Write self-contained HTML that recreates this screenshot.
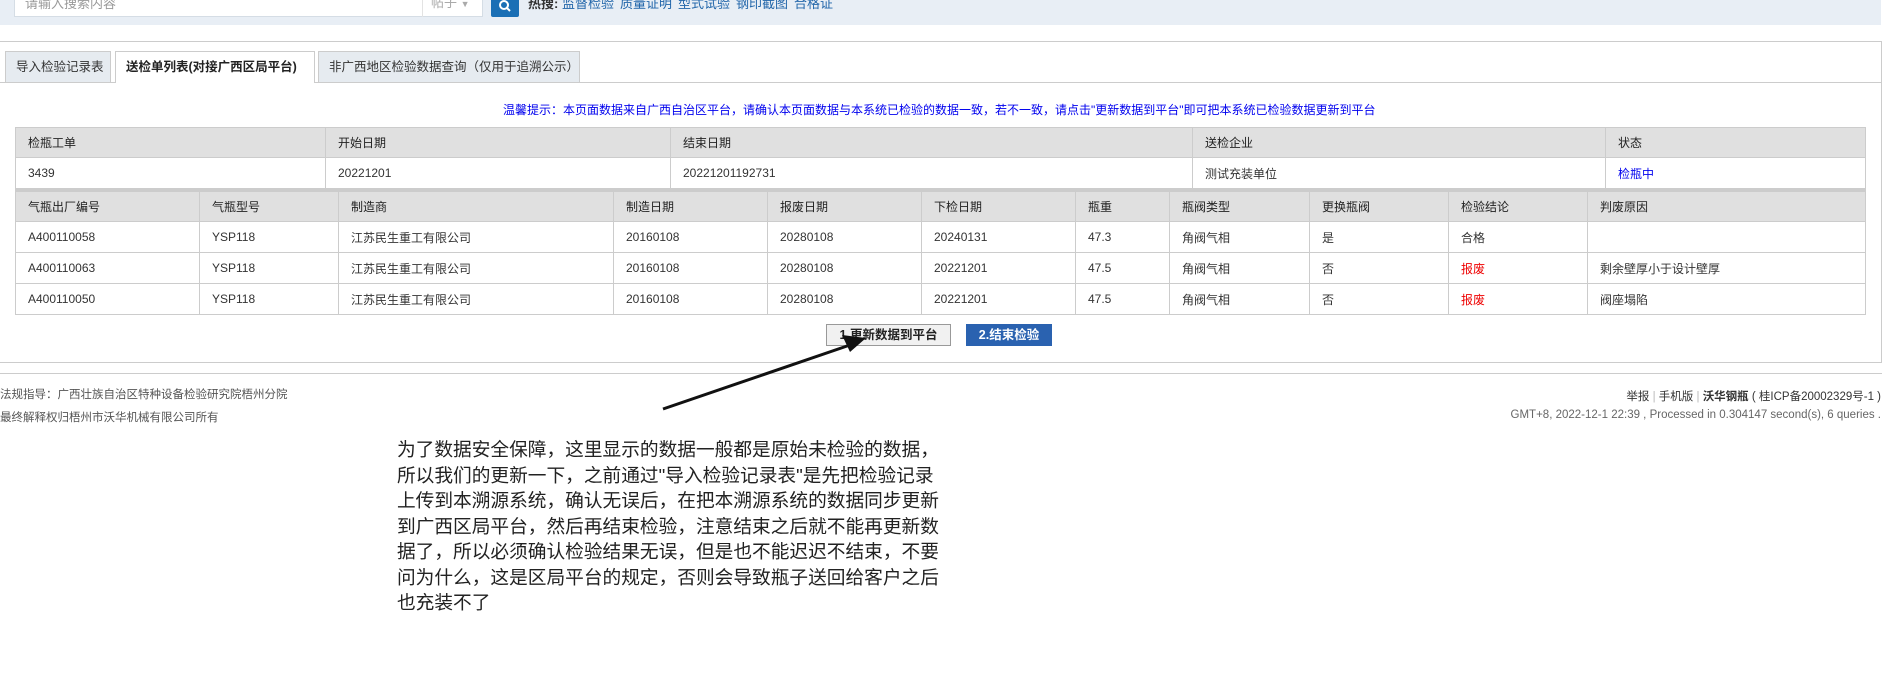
<!DOCTYPE html>
<html><head><meta charset="utf-8"><style>
*{margin:0;padding:0;box-sizing:border-box}
body{width:1899px;height:691px;background:#fff;font-family:"Liberation Sans","Noto Sans CJK SC",sans-serif;font-size:12px;color:#333;position:relative;overflow:hidden}
.abs{position:absolute}
.top{left:0;top:0;width:1881px;height:25px;background:#e8eef5}
.inp{left:14px;top:-8px;width:469px;height:25px;background:#fff;border:1px solid #d5dde5;color:#999;padding:0 0 0 10px;line-height:22px;font-size:13px}
.drop{left:422px;top:-8px;width:61px;height:25px;border-left:1px solid #e3e3e3;color:#aaa;line-height:22px;padding-left:8px;font-size:13px}
.sbtn{left:491px;top:-3px;width:28px;height:20px;background:#1a6fb5;border-radius:2px}
.hot{left:528px;top:-4px;font-size:13px;color:#333;line-height:16px}
.hot a{color:#2266aa;text-decoration:none;margin-right:6px}
.box{left:0;top:41px;width:1882px;height:322px;border-top:1px solid #ccc;border-right:1px solid #ccc}
.tabline{left:0;top:82px;width:1881px;height:1px;background:#ccc}
.tab{top:51px;height:31px;border:1px solid #ccc;border-bottom:none;background:#e6ebf0;line-height:30px;padding-left:10px;font-size:12.5px}
.tab.on{background:#fff;height:32px;font-weight:bold;color:#222}
.notice{left:503px;top:101px;color:#0000ee;font-size:12px;white-space:nowrap}
table{position:absolute;border-collapse:collapse;table-layout:fixed}
td{border:1px solid #ccc;padding-left:12px;font-size:12px;color:#333;white-space:nowrap;overflow:hidden}
tr.h td{background:#e0e0e0;color:#222}
.r{color:#e00}
.b{color:#0000ee}
.btn1{left:826px;top:324px;width:125px;height:22px;background:#f1f1f1;border:1px solid #999;font-weight:bold;text-align:center;line-height:20px;font-size:12.5px;color:#222}
.btn2{left:966px;top:324px;width:86px;height:22px;background:#2a62b0;text-align:center;line-height:22px;color:#fff;font-weight:bold;font-size:12.5px}
.fl{left:0;top:373px;width:1882px;height:1px;background:#ccc}
.ft{color:#555;font-size:11.5px;white-space:nowrap}
.note{left:397px;top:437px;width:552px;font-size:18.7px;line-height:25.5px;color:#222}
</style></head><body>
<div class="abs top"></div>
<div class="abs inp">请输入搜索内容</div>
<div class="abs drop">帖子 <span style="font-size:9px">▼</span></div>
<div class="abs sbtn"><svg width="28" height="20"><circle cx="13" cy="8" r="4" fill="none" stroke="#fff" stroke-width="2"/><line x1="16" y1="11" x2="19" y2="14" stroke="#fff" stroke-width="2"/></svg></div>
<div class="abs hot"><b>热搜:</b> <a>监督检验</a><a>质量证明</a><a>型式试验</a><a>钢印截图</a><a>合格证</a></div>

<div class="abs box"></div>
<div class="abs tabline"></div>
<div class="abs tab" style="left:5px;width:106px">导入检验记录表</div>
<div class="abs tab on" style="left:115px;width:200px">送检单列表(对接广西区局平台)</div>
<div class="abs tab" style="left:318px;width:262px">非广西地区检验数据查询（仅用于追溯公示）</div>
<div class="abs notice">温馨提示：本页面数据来自广西自治区平台，请确认本页面数据与本系统已检验的数据一致，若不一致，请点击"更新数据到平台"即可把本系统已检验数据更新到平台</div>

<table style="left:15px;top:127px;width:1850px">
<colgroup><col style="width:310px"><col style="width:345px"><col style="width:522px"><col style="width:413px"><col style="width:260px"></colgroup>
<tr class="h" style="height:30px"><td>检瓶工单</td><td>开始日期</td><td>结束日期</td><td>送检企业</td><td>状态</td></tr>
<tr style="height:31px"><td>3439</td><td>20221201</td><td>20221201192731</td><td>测试充装单位</td><td class="b">检瓶中</td></tr>
</table>
<table style="left:15px;top:189px;width:1850px;border-top:3px solid #ccc">
<colgroup><col style="width:184px"><col style="width:139px"><col style="width:275px"><col style="width:154px"><col style="width:154px"><col style="width:154px"><col style="width:94px"><col style="width:140px"><col style="width:139px"><col style="width:139px"><col style="width:278px"></colgroup>
<tr class="h" style="height:31px"><td>气瓶出厂编号</td><td>气瓶型号</td><td>制造商</td><td>制造日期</td><td>报废日期</td><td>下检日期</td><td>瓶重</td><td>瓶阀类型</td><td>更换瓶阀</td><td>检验结论</td><td>判废原因</td></tr>
<tr style="height:31px"><td>A400110058</td><td>YSP118</td><td>江苏民生重工有限公司</td><td>20160108</td><td>20280108</td><td>20240131</td><td>47.3</td><td>角阀气相</td><td>是</td><td>合格</td><td></td></tr>
<tr style="height:31px"><td>A400110063</td><td>YSP118</td><td>江苏民生重工有限公司</td><td>20160108</td><td>20280108</td><td>20221201</td><td>47.5</td><td>角阀气相</td><td>否</td><td class="r">报废</td><td>剩余壁厚小于设计壁厚</td></tr>
<tr style="height:31px"><td>A400110050</td><td>YSP118</td><td>江苏民生重工有限公司</td><td>20160108</td><td>20280108</td><td>20221201</td><td>47.5</td><td>角阀气相</td><td>否</td><td class="r">报废</td><td>阀座塌陷</td></tr>
</table>
<div class="abs btn1">1.更新数据到平台</div>
<div class="abs btn2">2.结束检验</div>

<div class="abs" style="left:0;top:362px;width:1882px;height:1px;background:#ccc"></div>
<div class="abs fl"></div>
<div class="abs ft" style="left:0;top:386px">法规指导：广西壮族自治区特种设备检验研究院梧州分院</div>
<div class="abs ft" style="left:0;top:409px">最终解释权归梧州市沃华机械有限公司所有</div>
<div class="abs ft" style="right:18px;top:388px;color:#333">举报 <span style="color:#bbb">|</span> 手机版 <span style="color:#bbb">|</span> <b>沃华钢瓶</b> ( 桂ICP备20002329号-1 )</div>
<div class="abs ft" style="right:18px;top:409px;color:#666">GMT+8, 2022-12-1 22:39 , Processed in 0.304147 second(s), 6 queries .</div>

<svg class="abs" style="left:0;top:0" width="1899" height="691"><line x1="663" y1="409" x2="850" y2="345" stroke="#111" stroke-width="3"/><polygon points="866,338 842,335 850,352" fill="#111"/></svg>

<div class="abs note">为了数据安全保障，这里显示的数据一般都是原始未检验的数据，所以我们的更新一下，之前通过"导入检验记录表"是先把检验记录上传到本溯源系统，确认无误后，在把本溯源系统的数据同步更新到广西区局平台，然后再结束检验，注意结束之后就不能再更新数据了，所以必须确认检验结果无误，但是也不能迟迟不结束，不要问为什么，这是区局平台的规定，否则会导致瓶子送回给客户之后也充装不了</div>
</body></html>
